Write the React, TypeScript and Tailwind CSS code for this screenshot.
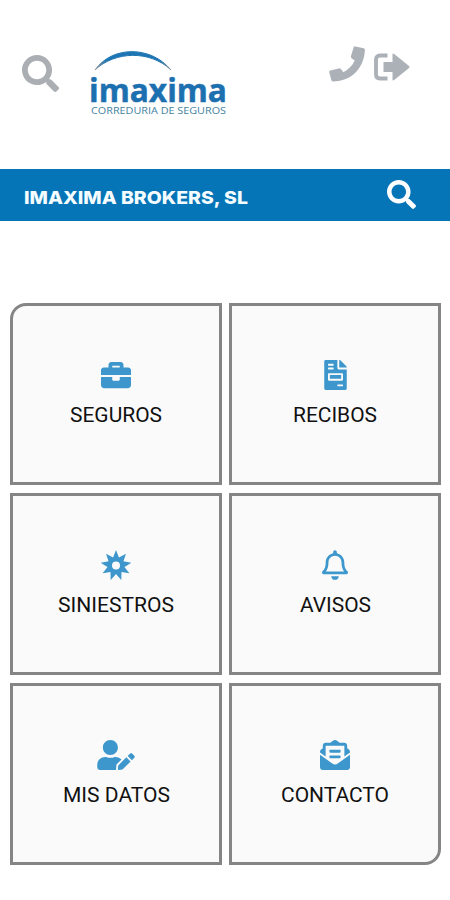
import React from "react";
import {
  FaBriefcase,
  FaEnvelopeOpenText,
  FaFileInvoice,
  FaRegBell,
  FaSearch,
  FaUserEdit,
} from "react-icons/fa";

type IconProps = { className?: string };

type MenuItem = {
  label: string;
  icon: React.ComponentType<IconProps>;
  iconSize: string;
  labelWidth: number;
  corner?: string;
};

// nine-pointed burst with a round hole in the middle
function BurstIcon({ className }: IconProps) {
  const points = Array.from({ length: 18 }, (_, i) => {
    const r = i % 2 === 0 ? 15.5 : 8.6;
    const a = (i * Math.PI) / 9 - Math.PI / 2;
    return `${(15 + r * Math.cos(a)).toFixed(2)},${(15.5 + r * Math.sin(a)).toFixed(2)}`;
  }).join(" ");

  return (
    <svg className={className} viewBox="0 0 30 30">
      <polygon points={points} fill="currentColor" />
      <circle cx="15" cy="15.5" r="4" fill="#fafafa" />
    </svg>
  );
}

function PhoneIcon({ className }: IconProps) {
  return (
    <svg className={className} viewBox="0 0 36 36" fill="currentColor">
      <path d="M26.4 0.4 34.6 2.2Q36 2.5 35.9 4C35.2 22 22.5 35.2 4.2 35.6Q2.8 35.7 2.4 34.3L0.3 26.6Q-0.1 25.1 1.3 24.6L9.8 22.4Q11.1 22 11.9 23L14.4 26.2C19.4 23.8 23.4 19.8 25.7 14.6L22.6 12.2Q21.6 11.3 22 10L24.6 1.5Q25 0.1 26.4 0.4Z" />
    </svg>
  );
}

function ExitIcon({ className }: IconProps) {
  return (
    <svg className={className} viewBox="0 0 36 28">
      <path d="M13.5 2.5H6Q2 2.5 2 6.5V21.5Q2 25.5 6 25.5H13.5" fill="none" stroke="currentColor" strokeWidth="3.8" />
      <path d="M9.5 9H18.5V1.8Q18.5 -0.7 20.5 1.2L35 13Q36 14 35 15L20.5 26.8Q18.5 28.7 18.5 26.2V19H9.5Z" fill="currentColor" />
    </svg>
  );
}

const menu: MenuItem[] = [
  { label: "SEGUROS", icon: FaBriefcase, iconSize: "h-[30px] w-[30px]", labelWidth: 92, corner: "rounded-tl-[16px]" },
  { label: "RECIBOS", icon: FaFileInvoice, iconSize: "h-[30px] w-[23px]", labelWidth: 84 },
  { label: "SINIESTROS", icon: BurstIcon, iconSize: "h-[30px] w-[30px]", labelWidth: 116 },
  { label: "AVISOS", icon: FaRegBell, iconSize: "h-[30px] w-[26px]", labelWidth: 71 },
  { label: "MIS DATOS", icon: FaUserEdit, iconSize: "h-[30px] w-[38px]", labelWidth: 107 },
  { label: "CONTACTO", icon: FaEnvelopeOpenText, iconSize: "h-[30px] w-[30px]", labelWidth: 108, corner: "rounded-br-[16px]" },
];

function Logo() {
  return (
    <svg className="h-[70px] w-[144px]" viewBox="-3 0 144 70">
      <defs>
        <linearGradient id="arc" x1="0" x2="1" y1="0" y2="0">
          <stop offset="0" stopColor="#8f969b" />
          <stop offset="0.15" stopColor="#1d75b3" />
          <stop offset="0.85" stopColor="#1d75b3" />
          <stop offset="1" stopColor="#8f969b" />
        </linearGradient>
      </defs>
      <path d="M5 22 C22 -2.5 61 -2.5 81 22 C60 2 25 3 5 22Z" fill="url(#arc)" stroke="url(#arc)" strokeWidth="1" />
      <text x="-1" y="54" textLength="138" lengthAdjust="spacingAndGlyphs" className="fill-[#1d70b0] stroke-[#1d70b0] stroke-[0.5px] font-['Open_Sans',sans-serif] text-[33px] font-bold">
        imaxima
      </text>
      <text x="1" y="65.5" textLength="135" lengthAdjust="spacingAndGlyphs" className="fill-[#3f7fa0] font-['Open_Sans',sans-serif] text-[9px]">
        CORREDURIA DE SEGUROS
      </text>
    </svg>
  );
}

function Header() {
  return (
    <header className="flex h-[169px] items-start pl-[22px] pr-[40px]">
      <FaSearch className="mt-[55px] h-[37px] w-[37px] text-[#abafb3]" />
      <div className="ml-[28px] mt-[48px]">
        <Logo />
      </div>
      <div className="ml-auto flex">
        <PhoneIcon className="mt-[46px] h-[36px] w-[36px] text-[#abb1b7]" />
        <ExitIcon className="ml-[9px] mt-[53px] h-[28px] w-[36px] text-[#abb1b7]" />
      </div>
    </header>
  );
}

function Tile({ label, icon: Icon, iconSize, labelWidth, corner }: MenuItem) {
  return (
    <button className={`flex h-[182px] flex-col items-center border-[3px] border-[#858585] bg-[#fafafa] pt-[54px] ${corner ?? ""}`}>
      <Icon className={`${iconSize} text-[#3d97cc]`} />
      <svg className="mt-[11px] h-[28px]" style={{ width: labelWidth }}>
        <text x="0" y="21" textLength={labelWidth} lengthAdjust="spacingAndGlyphs" className="fill-[#111111] font-['Roboto',sans-serif] text-[21px]">
          {label}
        </text>
      </svg>
    </button>
  );
}

export default function App() {
  return (
    <div className="h-[900px] w-[450px] overflow-hidden bg-white font-['Roboto',sans-serif]">
      <Header />
      <div className="flex h-[52px] items-center justify-between bg-[#0575b7] pl-[24px] pr-[34px] text-white">
        <svg className="mt-[6px] h-[28px] w-[226px]">
          <text x="0" y="20" textLength="224" lengthAdjust="spacingAndGlyphs" className="fill-[#f4fcff] font-['Inter',sans-serif] text-[18px] font-extrabold">
            IMAXIMA BROKERS, SL
          </text>
        </svg>
        <FaSearch className="-mt-[2px] h-[29px] w-[29px]" />
      </div>
      <main className="mt-[82px] grid grid-cols-2 gap-x-[7px] gap-y-[8px] pl-[10px] pr-[9px]">
        {menu.map((item) => (
          <Tile key={item.label} {...item} />
        ))}
      </main>
    </div>
  );
}
